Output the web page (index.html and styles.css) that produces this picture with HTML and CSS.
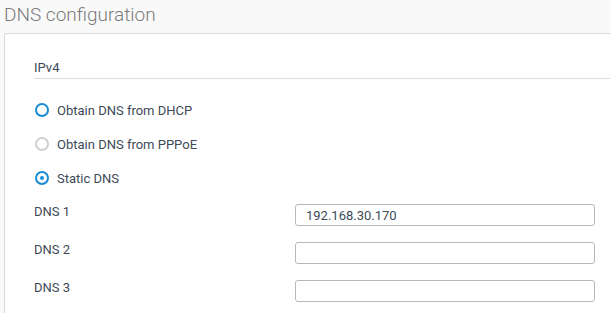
FILE: index.html
```html
<!DOCTYPE html>
<html lang="en">
<head>
    <meta charset="UTF-8">
    <title>DNS configuration</title>
    <link rel="stylesheet" href="styles.css">
</head>
<body>
    <h1 class="page-title">DNS configuration</h1>

    <div class="card">
        <div class="section-head">IPv4</div>

        <!-- Origen de los servidores DNS -->
        <div class="radio-list">
            <label class="radio-row">
                <span class="radio"></span>
                Obtain DNS from DHCP
            </label>
            <label class="radio-row">
                <span class="radio disabled"></span>
                Obtain DNS from PPPoE
            </label>
            <label class="radio-row">
                <span class="radio checked"></span>
                Static DNS
            </label>
        </div>

        <!-- Servidores estáticos -->
        <div class="fields">
            <div class="field-row">
                <label>DNS 1</label>
                <input type="text" value="192.168.30.170">
            </div>
            <div class="field-row">
                <label>DNS 2</label>
                <input type="text">
            </div>
            <div class="field-row">
                <label>DNS 3</label>
                <input type="text">
            </div>
        </div>
    </div>
</body>
</html>
```

FILE: styles.css
```css
html, body {
    height: 313px;
    overflow: hidden;
}
body {
    font-family: Roboto, "Liberation Sans", sans-serif;
    margin: 0;
    padding: 0;
    background-color: #f9f9f9;
}
.page-title {
    margin: 0;
    padding: 3px 0 0 4px;
    height: 30px;
    font-size: 19px;
    font-weight: 300;
    color: #7a7a7a;
}
.card {
    margin-left: 4px;
    margin-right: -30px;
    background: #fff;
    border: 1px solid #dadada;
    border-right: none;
    border-radius: 3px 0 0 0;
    padding: 26px 0 0 29px;
    height: 300px;
}
.section-head {
    font-size: 13px;
    color: #3d4a57;
    padding-bottom: 3px;
    border-bottom: 1px solid #dcdcdc;
}
.radio-list {
    margin-top: 14px;
}
.radio-row {
    display: flex;
    align-items: center;
    gap: 8px;
    height: 34px;
    font-size: 13px;
    color: #3d4a57;
}
.radio {
    width: 10px;
    height: 10px;
    border: 2px solid #1a8bd6;
    border-radius: 50%;
    margin-left: 1px;
    position: relative;
}
.radio.disabled {
    border-color: #cfcfcf;
}
.radio.checked::after {
    content: "";
    position: absolute;
    left: 3px;
    top: 3px;
    width: 4px;
    height: 4px;
    border-radius: 50%;
    background: #1a8bd6;
}
.fields {
    margin-top: 1px;
}
.field-row {
    display: flex;
    align-items: center;
    height: 38px;
    font-size: 13px;
    color: #3d4a57;
}
.field-row label {
    width: 261px;
    margin-top: -8px;
}
.field-row input {
    width: 300px;
    height: 22px;
    box-sizing: border-box;
    border: 1px solid #b5b9bd;
    border-radius: 3px;
    padding: 0 10px;
    font-family: inherit;
    font-size: 13px;
    color: #3d4a57;
}
```
